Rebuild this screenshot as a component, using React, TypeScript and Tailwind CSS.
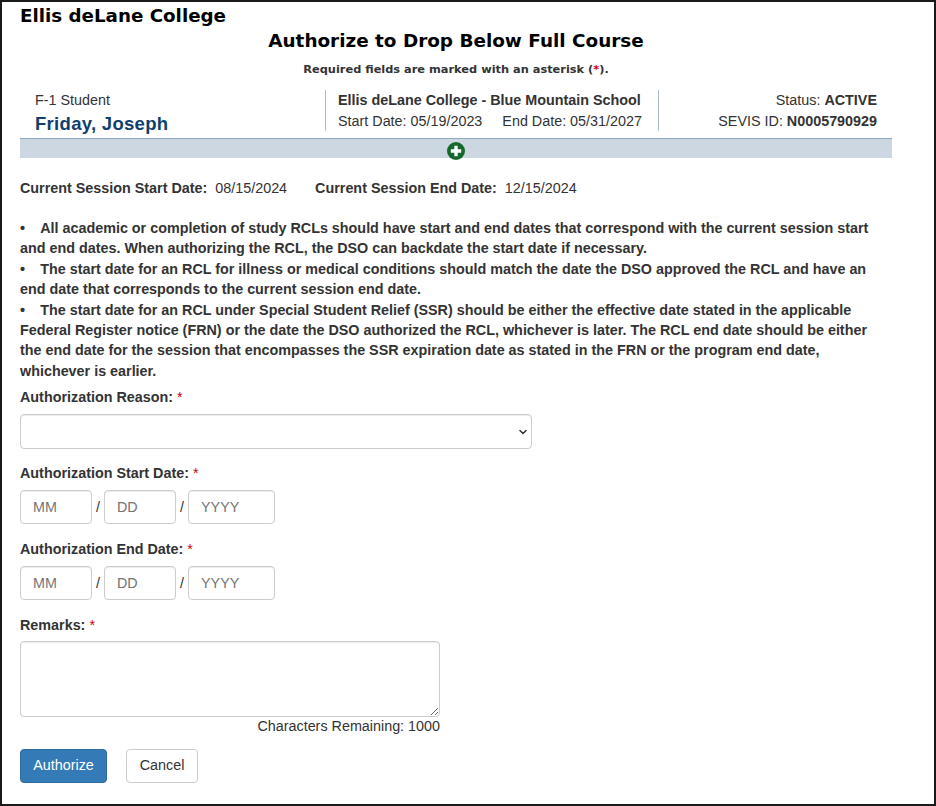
import { ChevronDown } from "lucide-react";

const inputClass =
  "h-[34px] rounded border border-[#ccc] bg-white px-3 text-[14.35px] text-[#555] placeholder:text-[#757575] shadow-[inset_0_1px_1px_rgba(0,0,0,0.075)]";

function Req() {
  return <span className="font-normal text-[#c00]"> *</span>;
}

function DateField({ label, className }: { label: string; className: string }) {
  return (
    <div className={className}>
      <label className="block h-5 font-bold leading-5">
        {label}:<Req />
      </label>
      <div className="mt-[7px] flex items-center">
        <input placeholder="MM" className={`${inputClass} w-[72px]`} />
        <span className="w-3 text-center">/</span>
        <input placeholder="DD" className={`${inputClass} w-[72px]`} />
        <span className="w-3 text-center">/</span>
        <input placeholder="YYYY" className={`${inputClass} w-[87px]`} />
      </div>
    </div>
  );
}

export default function App() {
  return (
    <div className="h-[806px] w-[936px] overflow-hidden border-2 border-[#1a1a1a] bg-white pl-[18px] font-['Liberation_Sans',Arial,sans-serif] text-[14.35px] leading-5 text-[#333]">
      <h1 className="h-[24px] pt-0.5 font-['DejaVu_Sans',Verdana,sans-serif] text-[18.27px] leading-6 font-bold text-black">
        Ellis deLane College
      </h1>
      <h2 className="mt-[3px] w-[872px] text-center font-['DejaVu_Sans',Verdana,sans-serif] text-[18.4px] leading-6 font-bold text-black">
        Authorize to Drop Below Full Course
      </h2>
      <p className="mt-[6px] w-[872px] text-center font-['DejaVu_Sans',Verdana,sans-serif] text-[11.37px] leading-5 font-bold">
        Required fields are marked with an asterisk (<span className="text-[#c00]">*</span>).
      </p>

      <div className="mt-[11px] flex h-[41px] w-[872px]">
        <div className="w-[305px] pl-[15px]">
          <div>F-1 Student</div>
          <div className="mt-1 text-[18.5px] leading-5 font-bold tracking-[0.3px] text-[#0f3f6e]">Friday, Joseph</div>
        </div>
        <div className="w-[333px] border-l border-[#a9bccd] pl-[12px]">
          <div className="font-bold">Ellis deLane College - Blue Mountain School</div>
          <div className="mt-[1px]">
            Start Date: 05/19/2023<span className="ml-5">End Date: 05/31/2027</span>
          </div>
        </div>
        <div className="flex-1 border-l border-[#a9bccd] pr-[15px] text-right">
          <div>
            Status: <b>ACTIVE</b>
          </div>
          <div className="mt-[1px]">
            SEVIS ID: <b>N0005790929</b>
          </div>
        </div>
      </div>

      <div className="mt-[7px] flex h-[20px] w-[872px] items-center justify-center border-t border-[#8fa9c0] bg-[#cdd7e2]">
        <svg viewBox="0 0 18 18" className="mt-1 h-[18px] w-[18px]">
          <circle cx="9" cy="9" r="9" fill="#14692a" />
          <path d="M9 3.8v10.4M3.8 9h10.4" stroke="#fff" strokeWidth="3.4" />
        </svg>
      </div>

      <div className="mt-5 flex h-5">
        <b>Current Session Start Date:</b>
        <span className="ml-2">08/15/2024</span>
        <b className="ml-[28px]">Current Session End Date:</b>
        <span className="ml-2">12/15/2024</span>
      </div>

      <div className="mt-5 w-[860px] leading-[20.4px] font-bold">
        <p>
          •&ensp;&nbsp;&nbsp;All academic or completion of study RCLs should have start and end dates that correspond with the current session start and end dates. When authorizing the RCL, the DSO can backdate the start date if necessary.
        </p>
        <p>
          •&ensp;&nbsp;&nbsp;The start date for an RCL for illness or medical conditions should match the date the DSO approved the RCL and have an end date that corresponds to the current session end date.
        </p>
        <p>
          •&ensp;&nbsp;&nbsp;The start date for an RCL under Special Student Relief (SSR) should be either the effective date stated in the applicable Federal Register notice (FRN) or the date the DSO authorized the RCL, whichever is later. The RCL end date should be either the end date for the session that encompasses the SSR expiration date as stated in the FRN or the program end date, whichever is earlier.
        </p>
      </div>

      <label className="mt-[6px] block h-5 font-bold">
        Authorization Reason:<Req />
      </label>
      <div className="relative mt-[7px] h-[35px] w-[512px]">
        <select className="h-full w-full appearance-none rounded border border-[#ccc] bg-white shadow-[inset_0_1px_1px_rgba(0,0,0,0.075)]" />
        <ChevronDown className="pointer-events-none absolute top-[12px] right-[3px] h-3 w-3 text-[#333]" strokeWidth={3} />
      </div>

      <DateField label="Authorization Start Date" className="mt-[14px]" />
      <DateField label="Authorization End Date" className="mt-[15px]" />

      <label className="mt-[15px] block h-5 font-bold">
        Remarks:<Req />
      </label>
      <textarea className="mt-[6px] block h-[76px] w-[420px] rounded border border-[#ccc] bg-white shadow-[inset_0_1px_1px_rgba(0,0,0,0.075)]" />
      <div className="-mt-px h-5 w-[420px] text-right">Characters Remaining: 1000</div>

      <div className="mt-[13px] flex gap-[19px]">
        <button className="h-[34px] w-[87px] rounded border border-[#2e6da4] bg-[#337ab7] pb-0.5 text-white">Authorize</button>
        <button className="h-[34px] w-[72px] rounded border border-[#ccc] bg-white pb-0.5 text-[#333]">Cancel</button>
      </div>
    </div>
  );
}
